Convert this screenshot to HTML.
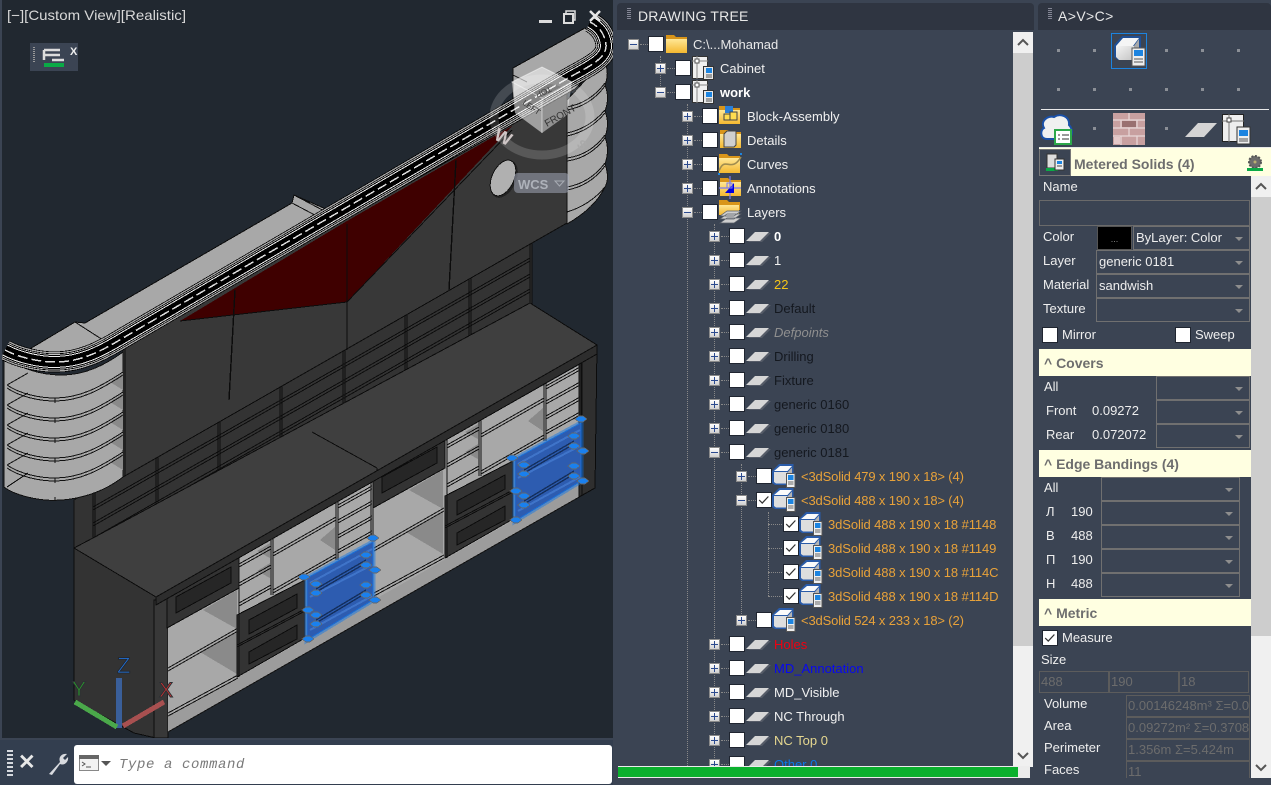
<!DOCTYPE html>
<html><head><meta charset="utf-8"><title>Drawing Tree</title>
<style>
html,body{margin:0;padding:0;width:1271px;height:785px;overflow:hidden;background:#3b4453;font-family:"Liberation Sans",sans-serif;font-size:13px;color:#f0f0f0}
*{box-sizing:border-box}
.a{position:absolute}
.hdr{position:absolute;top:3px;height:27px;background:#2f3541;border-radius:4px 4px 0 0;font-size:14px;line-height:27px;color:#e8e8e8;letter-spacing:.2px}
.grip{position:absolute;top:8px;width:4px;height:11px;background:repeating-linear-gradient(#aab 0 1px,transparent 1px 2px);opacity:.7}
#tree{position:absolute;left:0;top:32px;width:1013px;height:734px;overflow:hidden}
.r{position:absolute;height:24px;width:500px;left:0;line-height:24px;white-space:nowrap}
.l1{left:27px}.l2{left:54px}.l3{left:81px}.l4{left:108px}.l5{left:135px}
.e{position:absolute;left:628px;top:7px;width:11px;height:11px;background:linear-gradient(#fff,#cfcfcf);border:1px solid #8a8a8a}
.e::before{content:"";position:absolute;left:1px;top:4px;width:7px;height:1px;background:#2b4a8f}
.p::after{content:"";position:absolute;left:4px;top:1px;width:1px;height:7px;background:#2b4a8f}
.d{position:absolute;left:640px;top:12px;width:8px;border-top:1px dotted #888}
.c{position:absolute;left:648px;top:4px;width:16px;height:16px;background:#fff;border:1px solid #1f2530}
.ic{position:absolute;left:664px;top:0;width:28px;height:26px;overflow:visible}
.t{position:absolute;left:693px;top:1px}
.o{color:#e8a23a;letter-spacing:-.15px}
.v{position:absolute;border-left:1px dotted #888;width:0}
.h{position:absolute;border-top:1px dotted #888;height:0}
.lab{position:absolute;line-height:16px;white-space:nowrap;color:#eee}
.box{position:absolute;border:1px solid #6a6a6a}
.cb{position:absolute;border:1px solid #707070;color:#eee;line-height:21px;padding-left:2px;white-space:nowrap}
.cb::after{content:"";position:absolute;right:6px;top:10px;border-left:4px solid transparent;border-right:4px solid transparent;border-top:4px solid #8e8e8e}
.y{position:absolute;left:1039px;width:212px;height:27px;background:#ffffe1;color:#6e6e6e;font-weight:bold;line-height:29px;padding-left:5px;font-size:14px}
.ck{position:absolute;width:16px;height:16px;background:#fff;border:1px solid #1f2530}
.gi{position:absolute;border:1px solid #5c5c5c;color:#6c6c6c;line-height:19px;padding-left:1px;overflow:hidden;white-space:nowrap}
.dot{position:absolute;width:3px;height:3px;background:#8b8f96}
</style></head><body>
<svg width="0" height="0" style="position:absolute"><defs>
<linearGradient id="fy" x1="0" y1="0" x2="0" y2="1"><stop offset="0" stop-color="#ffe796"/><stop offset="1" stop-color="#f4b830"/></linearGradient>
<linearGradient id="cg" x1="0" y1="0" x2="1" y2="1"><stop offset="0" stop-color="#f4f4f4"/><stop offset="1" stop-color="#c4c4c4"/></linearGradient>
<symbol id="folder" viewBox="0 0 28 26"><path d="M2 3h8l2 2h11v16H2z" fill="#d8951a"/><path d="M2 7h21v14H2z" fill="url(#fy)"/></symbol>
<symbol id="cab" viewBox="0 0 28 26"><rect x="1.500" y="0.500" width="15" height="22" fill="#f0f0f0" stroke="#333"/><path d="M1 5h16M6 0v23" stroke="#888" fill="none"/><rect x="4" y="3" width="4" height="4" fill="#fff" stroke="#555"/><rect x="12.500" y="10.500" width="10" height="13" fill="#e8e8e8" stroke="#333"/><rect x="15" y="12" width="6" height="5" fill="#1c84e0"/><path d="M15 19h6M15 21h6" stroke="#555"/></symbol>
<symbol id="block" viewBox="0 0 28 26"><path d="M1 2h8l2 2h11v16H1z" fill="#d8951a"/><path d="M1 6h21v14H1z" fill="url(#fy)"/><rect x="7" y="2" width="8" height="7" fill="#2a7fd8"/><rect x="12" y="8" width="7" height="8" fill="#ffdc50" stroke="#444"/><rect x="6" y="10" width="6" height="6" fill="#ffdc50" stroke="#444"/></symbol>
<symbol id="det" viewBox="0 0 28 26"><path d="M2 2h8l2 2h11v16H2z" fill="#d8951a"/><path d="M2 6h21v14H2z" fill="url(#fy)"/><path d="M6 6l3-3h9v14l-2 2H6z" fill="#cfcfcf" stroke="#444"/></symbol>
<symbol id="curv" viewBox="0 0 28 26"><path d="M1 2h8l2 2h11v17H1z" fill="#d8951a"/><path d="M1 6h21v15H1z" fill="url(#fy)"/><path d="M1 19C7 3 13 22 23 5" stroke="#a08d50" stroke-width="1.600" fill="none"/><rect x="22" y="1" width="2" height="2" fill="#1c84e0"/><rect x="0" y="21" width="2" height="2" fill="#1c84e0"/></symbol>
<symbol id="anno" viewBox="0 0 28 26"><path d="M2 2h8l2 2h11v16H2z" fill="#d8951a"/><path d="M2 6h21v14H2z" fill="url(#fy)"/><path d="M1 12h22M12 0v23" stroke="#7a7af0" stroke-width="1.200"/><path d="M7 17l9-10v10z" fill="#0000e0"/><rect x="9" y="7" width="5" height="5" fill="none" stroke="#7a7af0"/></symbol>
<symbol id="lays" viewBox="0 0 28 26"><path d="M1 0h8l2 2h11v8H1z" fill="#d8951a"/><path d="M1 5h20v10H1z" fill="url(#fy)"/><path d="M2 16l7-5h14l-7 5zM2 19l7-5h14l-7 5zM2 23l7-5h14l-7 5z" fill="#cfcfcf" stroke="#5a5f68" stroke-width=".7"/></symbol>
<symbol id="lay" viewBox="0 0 28 26"><polygon points="3,18 12,9 26,9 17,18" fill="#565c68"/><polygon points="1,17 10,8 24,8 15,17" fill="#d6d6d6"/></symbol>
<symbol id="solid" viewBox="0 0 28 26"><path d="M0 7L7 0H21.500V16L16 21H3L0 19z" fill="#2a5ba8"/><path d="M2 7L8 2H20L15.500 7z" fill="#fafafa"/><path d="M16 8L20 3.500V15L16 19z" fill="#b4b4b4"/><path d="M2 8H15.500V19.500H4L2 18z" fill="#dedede"/><rect x="14.500" y="9.500" width="8.500" height="14" fill="#f0f0f0" stroke="#555"/><rect x="16" y="11" width="5.500" height="5" fill="#1c84e0"/><path d="M16 18h5.500M16 20h5.500" stroke="#666"/></symbol>
<symbol id="tick" viewBox="0 0 16 16"><path d="M2.500 8L6 11.500 13 4" fill="none" stroke="#333" stroke-width="1.400"/></symbol>
<path id="mold" d="M5,350 C20,358 40,362 55,362 C80,362 100,352 123,338 L570,77 C590,66 607,58 606,45 C605,35 600,27 590,22" fill="none"/>
<polygon id="g" points="-6,0 -2,-3 2,-3 6,0 2,3 -2,3" fill="#1a80ee" stroke="#666" stroke-width=".7"/>
<g id="unit">
<polygon points="257,551 270,558 270,543" fill="#8a8a8a"/>
<polygon points="257,571 270,578 270,563" fill="#8a8a8a"/>
<polygon points="320,540 335,550 335,527" fill="#8a8a8a"/>
<path d="M239,564L271,546M239,567L271,549M239,583L271,565M239,586L271,568M239,603L271,585M239,606L271,588M273,553L336,517M273,556L336,520M273,590L336,554M273,593L336,557M338,505L372,486M338,508L372,489M338,520L372,501M338,523L372,504M338,535L372,516M338,538L372,519M338,550L372,531M338,553L372,534M338,565L372,546M338,568L372,549" stroke="#111" fill="none"/>
<path d="M239,555V620M271,538V595M273,537V595M336,500V560M338,499V560M371,481V540M373,480V540" stroke="#111" fill="none"/>
<polygon points="237,615 305,580 305,638 237,677" fill="#333" stroke="#0c0c0c"/>
<path d="M237,645L305,609M237,647L305,611M239,615V677" stroke="#0c0c0c"/>
<polygon points="249,620 297,594 297,608 249,634" fill="#262626" stroke="#0c0c0c"/>
<polygon points="249,652 297,625 297,639 249,664" fill="#262626" stroke="#0c0c0c"/>
<polygon points="307,578 373,542 373,600 307,640" fill="#1677e6" fill-opacity=".45" stroke="#1677e6" stroke-opacity=".5" stroke-width="5"/>
<polygon points="307,578 373,542 373,600 307,640" fill="#2d5cb0" stroke="#1a6fd8"/>
<path d="M316,589L366,560M316,592L366,563M316,620L366,590M316,623L366,593" stroke="#14305f" stroke-width="1.400"/>
<path d="M310,597L372,565M310,630L372,596M310,583L372,549" stroke="#3f74c9" stroke-width="2"/>
<use href="#g" x="373" y="538"/><use href="#g" x="304" y="577"/><use href="#g" x="375" y="570"/><use href="#g" x="366" y="555"/><use href="#g" x="316" y="584"/><use href="#g" x="366" y="565"/><use href="#g" x="316" y="593"/><use href="#g" x="308" y="610"/><use href="#g" x="375" y="600"/><use href="#g" x="366" y="585"/><use href="#g" x="366" y="595"/><use href="#g" x="316" y="615"/><use href="#g" x="316" y="624"/><use href="#g" x="308" y="639"/>
</g>
<g id="bay">
<polygon points="203,610 237,629 237,590" fill="#8a8a8a"/>
<polygon points="200,652 237,674 237,632" fill="#8a8a8a"/>
<path d="M168,668L238,628M168,671L238,631M168,713L238,675M168,716L238,678" stroke="#111" fill="none"/>
<polygon points="167,598 239,555 239,588 167,628" fill="#333" stroke="#0c0c0c"/>
<polygon points="176,597 231,567 231,583 176,613" fill="#262626" stroke="#0c0c0c"/>
</g>
</defs></svg>

<!-- Viewport -->
<svg class="a" style="left:2px;top:0" width="611" height="738" viewBox="2 0 611 738" shape-rendering="crispEdges">
<rect x="2" y="0" width="611" height="738" fill="#212830"/>
<polygon points="74,500 123,470 532,240 532,306 312,434 156,524 93,560 74,548" fill="#333" stroke="#111"/>
<path d="M93,507L530,258M93,510L530,261M93,523L530,274M93,526L530,277M93,538L530,289M93,541L530,292" stroke="#0d0d0d" fill="none"/>
<path d="M93,490V557M95,490V556M156,458V521M158,457V520M218,423V486M220,422V485M280,387V451M282,386V450M343,351V415M345,350V414M405,316V379M407,315V378M469,279V342M471,278V341M530,244V308M532,243V307" stroke="#0d0d0d" fill="none"/>
<polygon points="74,548 156,597 156,738 134,733 74,700" fill="#333" stroke="#0c0c0c"/>
<polygon points="154,600 168,598 168,738 154,738" fill="#383838" stroke="#0c0c0c"/>
<polygon points="168,598 579,365 579,497 168,732" fill="#a8a8a8"/>
<polygon points="168,716 237,678 579,483 579,497 168,732" fill="#9c9c9c"/>
<path d="M168,732L595,488" stroke="#111" fill="none"/>
<polygon points="579,350 597,346 595,488 579,497" fill="#2f2f2f" stroke="#0c0c0c"/>
<path d="M579,355V497M582,354V496" stroke="#0c0c0c"/>
<use href="#bay"/><use href="#bay" transform="translate(206,-120)"/>
<use href="#unit"/><use href="#unit" transform="translate(208,-119)"/>
<path d="M239,556V620M447,438V500" stroke="#111" fill="none"/>
<polygon points="74,548 93,538 530,303 597,345 597,354 156,605 156,597" fill="#3f3f3f" stroke="#0c0c0c"/>
<path d="M156,597L597,345M312,432L377,468M377,468V476" stroke="#0c0c0c" fill="none"/>
<polygon points="156,597 597,345 597,354 156,605" fill="#2d2d2d" stroke="#0c0c0c"/>
<polygon points="123,340 567,85 567,223 123,477" fill="#383838" stroke="#0c0c0c"/>
<path d="M125,340V476" stroke="#0c0c0c"/>
<polygon points="180,321 347,221 512,126 347,302" fill="#3f0000"/>
<path d="M180,321L347,302L512,130" stroke="#0c0c0c" fill="none"/>
<path d="M235,290L229,400M347,224V350M456,160L449,290" stroke="#0c0c0c" stroke-width="1.400" fill="none"/>
<ellipse cx="504" cy="179" rx="12" ry="20" transform="rotate(25 504 179)" fill="#222"/>
<ellipse cx="503" cy="178" rx="11" ry="19" transform="rotate(25 503 178)" fill="#b0b0b0" stroke="#111"/>
<path d="M567,100 L604,60 Q610,72 605,85 Q610,98 605,111 Q610,124 605,137 Q610,150 605,164 Q610,178 605,187 Q595,208 567,224 Z" fill="#a8a8a8" stroke="#111"/>
<path d="M567,107Q590,103 605,83M567,110Q590,106 605,86M567,133Q590,128 605,110M567,136Q590,131 605,113M567,158Q590,155 605,135M567,161Q590,158 605,138M567,187Q590,183 605,163M567,190Q590,186 605,166M567,212Q590,205 605,187" stroke="#111" fill="none"/>
<polygon points="28,350 75,322 85,323 292,203 294,195 328,210 513,102 513,68 585,28 596,37 606,58 575,89 123,345 62,366" fill="#a8a8a8" stroke="#0c0c0c"/>
<path d="M292,203L328,222M294,195L330,214M513,68V75L527,82M75,322L103,340" stroke="#111" fill="none"/>
<path d="M4,357 C20,368 40,375 62,375 C85,375 105,365 123,352 L123,477 C100,495 70,502 45,500 C25,498 10,492 4,487 Z" fill="#a8a8a8" stroke="#111"/>
<polygon points="110,382 123,390 123,373" fill="#8a8a8a"/><polygon points="110,402 123,410 123,393" fill="#8a8a8a"/><polygon points="110,422 123,430 123,413" fill="#8a8a8a"/><polygon points="110,442 123,450 123,433" fill="#8a8a8a"/><polygon points="110,462 123,470 123,453" fill="#8a8a8a"/>
<g fill="none" stroke="#111">
<path d="M7,385C20,394 40,398 55,398C80,398 100,387 123,372M7,388C20,397 40,401 55,401C80,401 100,390 123,375M7,385L28,373"/>
<path d="M7,405C20,414 40,418 55,418C80,418 100,407 123,392M7,408C20,417 40,421 55,421C80,421 100,410 123,395M7,405L28,393"/>
<path d="M7,425C20,434 40,438 55,438C80,438 100,427 123,412M7,428C20,437 40,441 55,441C80,441 100,430 123,415M7,425L28,413"/>
<path d="M7,445C20,454 40,458 55,458C80,458 100,447 123,432M7,448C20,457 40,461 55,461C80,461 100,450 123,435M7,445L28,433"/>
<path d="M7,465C20,474 40,478 55,478C80,478 100,467 123,452M7,468C20,477 40,481 55,481C80,481 100,470 123,455M7,465L28,453"/>
<path d="M7,487L28,473M55,398v5M55,418v5M55,438v5M55,458v5M55,478v5M55,497v4M4,357V487"/>
</g>
<use href="#mold" stroke="#000" stroke-width="21"/>
<use href="#mold" stroke="#a8a8a8" stroke-width="19.500"/>
<use href="#mold" stroke="#000" stroke-width="17"/>
<use href="#mold" stroke="#c8c8c8" stroke-width="15.500"/>
<use href="#mold" stroke="#000" stroke-width="14"/>
<use href="#mold" stroke="#eee" stroke-width="12"/>
<use href="#mold" stroke="#000" stroke-width="10"/>
<use href="#mold" stroke="#ddd" stroke-width="1.500" stroke-dasharray="10 4"/>
<path d="M119,678V728" stroke="#3a5f9a" stroke-width="6"/>
<path d="M75,702L117,727" stroke="#4aa84a" stroke-width="5"/>
<path d="M164,702L123,726" stroke="#a85050" stroke-width="5"/>
<text x="117" y="673" font-size="22" fill="#1f7af0" stroke="#25292f" stroke-width="1">Z</text>
<text x="72" y="696" font-size="21" fill="#2aa82a" stroke="#2c3034" stroke-width="1">Y</text>
<text x="159" y="697" font-size="21" fill="#e03030" stroke="#2c3034" stroke-width="1">X</text>
<g shape-rendering="auto">
<ellipse cx="542" cy="117" rx="48" ry="38" fill="none" stroke="#fff" stroke-opacity=".16" stroke-width="9"/>
<polygon points="512,82 542,67 572,82 542,98" fill="#fff" fill-opacity=".5"/>
<polygon points="512,82 542,98 542,133 515,113" fill="#fff" fill-opacity=".52"/>
<polygon points="542,98 572,82 567,115 542,133" fill="#fff" fill-opacity=".45"/>
<path d="M512,82L542,67L572,82L542,98ZM542,98V133" stroke="#fff" stroke-opacity=".5" fill="none"/>
<text x="0" y="0" font-size="8" fill="#333" transform="translate(522,104) rotate(35)">LEFT</text>
<text x="0" y="0" font-size="10" fill="#333" transform="translate(547,127) rotate(-30)">FRONT</text>
<text x="0" y="0" font-size="8" fill="#444" transform="translate(550,86) rotate(155)">TOP</text>
<text x="0" y="0" font-size="18" font-weight="bold" fill="#cfc6c6" transform="translate(493,139) rotate(25)">W</text>
<text x="0" y="0" font-size="13" font-weight="bold" fill="#aaa" transform="translate(576,146) rotate(35)">S</text>
<rect x="514" y="173" width="55" height="20" rx="4" fill="#a9afc2" fill-opacity=".5"/>
<text x="518" y="189" font-size="13" font-weight="bold" fill="#aeb2ba">WCS</text>
<path d="M555,181h9l-4.500,5z" fill="none" stroke="#a8acb4"/>
<rect x="539" y="20" width="13" height="3" fill="#dcdcdc"/>
<rect x="566" y="11" width="9" height="9" fill="none" stroke="#ddd" stroke-width="1.500"/>
<rect x="564" y="14" width="9" height="9" fill="#212830" stroke="#ddd" stroke-width="2"/>
<path d="M590,11L600,21M600,11L590,21" stroke="#e6e6e6" stroke-width="2.500"/>
<text x="7" y="20" font-size="14" fill="#d8d8d8" textLength="179" lengthAdjust="spacingAndGlyphs">[−][Custom View][Realistic]</text>
<rect x="30" y="43" width="48" height="28" fill="#3b4453"/>
<path d="M34,47V63" stroke="#999" stroke-width="2" stroke-dasharray="1 1"/>
<path d="M44,50V60M44,50h16M44,55h16M52,60h12" stroke="#ddd" stroke-width="2.500" fill="none"/>
<rect x="44" y="63" width="20" height="4" fill="#0aaa46"/>
<text x="70" y="55" font-size="11" font-weight="bold" fill="#eee">X</text>
</g>
</svg>

<!-- command bar -->
<div class="a" style="left:0;top:740px;width:613px;height:45px;background:#333e4f"></div>
<div class="a" style="left:7px;top:750px;width:6px;height:26px;background:repeating-linear-gradient(#d5d8de 0 2px,transparent 2px 4px);"></div>
<div class="a" style="left:18px;top:752px;font-size:21px;line-height:22px;color:#e8e8e8;font-weight:bold">✕</div>
<svg class="a" style="left:46px;top:752px" width="24" height="24" viewBox="0 0 24 24"><path d="M3 22L14 10C12 5 16 1 21 2L17 6 19 8 22 5C23 10 18 14 14 12L6 23z" fill="#d8dadf"/></svg>
<div class="a" style="left:74px;top:745px;width:538px;height:39px;background:#fff;border-radius:3px"></div>
<svg class="a" style="left:79px;top:755px" width="34" height="18" viewBox="0 0 34 18"><rect x="0.500" y="0.500" width="19" height="15" fill="#f2f2f2" stroke="#888"/><rect x="0" y="0" width="20" height="4" fill="#666"/><path d="M3 7l3 2-3 2M7 12h5" stroke="#555" fill="none"/><path d="M22 6h10l-5 5z" fill="#555"/></svg>
<div class="a" style="left:119px;top:756px;font-family:'Liberation Mono',monospace;font-style:italic;font-size:14px;color:#7a7a7a;letter-spacing:.6px;line-height:18px">Type a command</div>

<!-- Tree panel -->
<div class="hdr" style="left:617px;width:417px;padding-left:21px">DRAWING TREE</div><div class="grip" style="left:627px"></div>
<div class="a" style="left:1013px;top:32px;width:20px;height:735px;background:#f0f0f0"></div>
<div class="a" style="left:1013px;top:53px;width:20px;height:593px;background:#cdcdcd"></div>
<svg class="a" style="left:1013px;top:32px" width="20" height="21"><path d="M5 13l5-5 5 5" fill="none" stroke="#555" stroke-width="2"/></svg>
<svg class="a" style="left:1013px;top:745px" width="20" height="21"><path d="M5 8l5 5 5-5" fill="none" stroke="#555" stroke-width="2"/></svg>
<div class="a" style="left:618px;top:766px;width:412px;height:12px;background:#ececec"></div>
<div class="a" style="left:618px;top:767px;width:400px;height:10px;background:#0bb02e"></div>

<div id="tree">
<div class="v" style="left:660px;top:24px;height:36px"></div>
<div class="v" style="left:687px;top:72px;height:662px"></div>
<div class="v" style="left:714px;top:192px;height:542px"></div>
<div class="v" style="left:741px;top:432px;height:156px"></div>
<div class="v" style="left:768px;top:480px;height:84px"></div>
<div class="h" style="left:768px;top:492px;width:14px"></div><div class="h" style="left:768px;top:516px;width:14px"></div><div class="h" style="left:768px;top:540px;width:14px"></div><div class="h" style="left:768px;top:564px;width:14px"></div>

<div class="r" style="top:0"><i class="e"></i><i class="d"></i><i class="c"></i><svg class="ic"><use href="#folder"/></svg><span class="t" style="color:#e8e8e8">C:\...Mohamad</span></div>
<div class="r l1" style="top:24px"><i class="e p"></i><i class="d"></i><i class="c"></i><svg class="ic"><use href="#cab"/></svg><span class="t">Cabinet</span></div>
<div class="r l1" style="top:48px"><i class="e"></i><i class="d"></i><i class="c"></i><svg class="ic"><use href="#cab"/></svg><span class="t" style="font-weight:bold;color:#fff">work</span></div>
<div class="r l2" style="top:72px"><i class="e p"></i><i class="d"></i><i class="c"></i><svg class="ic"><use href="#block"/></svg><span class="t">Block-Assembly</span></div>
<div class="r l2" style="top:96px"><i class="e p"></i><i class="d"></i><i class="c"></i><svg class="ic"><use href="#det"/></svg><span class="t">Details</span></div>
<div class="r l2" style="top:120px"><i class="e p"></i><i class="d"></i><i class="c"></i><svg class="ic"><use href="#curv"/></svg><span class="t">Curves</span></div>
<div class="r l2" style="top:144px"><i class="e p"></i><i class="d"></i><i class="c"></i><svg class="ic"><use href="#anno"/></svg><span class="t">Annotations</span></div>
<div class="r l2" style="top:168px"><i class="e"></i><i class="d"></i><i class="c"></i><svg class="ic"><use href="#lays"/></svg><span class="t">Layers</span></div>
<div class="r l3" style="top:192px"><i class="e p"></i><i class="d"></i><i class="c"></i><svg class="ic"><use href="#lay"/></svg><span class="t" style="font-weight:bold;color:#fff">0</span></div>
<div class="r l3" style="top:216px"><i class="e p"></i><i class="d"></i><i class="c"></i><svg class="ic"><use href="#lay"/></svg><span class="t">1</span></div>
<div class="r l3" style="top:240px"><i class="e p"></i><i class="d"></i><i class="c"></i><svg class="ic"><use href="#lay"/></svg><span class="t" style="color:#f5c518">22</span></div>
<div class="r l3" style="top:264px"><i class="e p"></i><i class="d"></i><i class="c"></i><svg class="ic"><use href="#lay"/></svg><span class="t" style="color:#14181f">Default</span></div>
<div class="r l3" style="top:288px"><i class="e p"></i><i class="d"></i><i class="c"></i><svg class="ic"><use href="#lay"/></svg><span class="t" style="color:#8f8f8f;font-style:italic">Defpoints</span></div>
<div class="r l3" style="top:312px"><i class="e p"></i><i class="d"></i><i class="c"></i><svg class="ic"><use href="#lay"/></svg><span class="t" style="color:#14181f">Drilling</span></div>
<div class="r l3" style="top:336px"><i class="e p"></i><i class="d"></i><i class="c"></i><svg class="ic"><use href="#lay"/></svg><span class="t" style="color:#14181f">Fixture</span></div>
<div class="r l3" style="top:360px"><i class="e p"></i><i class="d"></i><i class="c"></i><svg class="ic"><use href="#lay"/></svg><span class="t" style="color:#14181f">generic 0160</span></div>
<div class="r l3" style="top:384px"><i class="e p"></i><i class="d"></i><i class="c"></i><svg class="ic"><use href="#lay"/></svg><span class="t" style="color:#14181f">generic 0180</span></div>
<div class="r l3" style="top:408px"><i class="e"></i><i class="d"></i><i class="c"></i><svg class="ic"><use href="#lay"/></svg><span class="t" style="color:#14181f">generic 0181</span></div>
<div class="r l4" style="top:432px"><i class="e p"></i><i class="d"></i><i class="c"></i><svg class="ic"><use href="#solid"/></svg><span class="t o">&lt;3dSolid 479 x 190 x 18&gt; (4)</span></div>
<div class="r l4" style="top:456px"><i class="e"></i><i class="d"></i><i class="c"><svg width="14" height="14" viewBox="0 0 16 16" style="display:block"><use href="#tick"/></svg></i><svg class="ic"><use href="#solid"/></svg><span class="t o">&lt;3dSolid 488 x 190 x 18&gt; (4)</span></div>
<div class="r l5" style="top:480px"><i class="c"><svg width="14" height="14" viewBox="0 0 16 16" style="display:block"><use href="#tick"/></svg></i><svg class="ic"><use href="#solid"/></svg><span class="t o" style="letter-spacing:-.1px">3dSolid 488 x 190 x 18 #1148</span></div>
<div class="r l5" style="top:504px"><i class="c"><svg width="14" height="14" viewBox="0 0 16 16" style="display:block"><use href="#tick"/></svg></i><svg class="ic"><use href="#solid"/></svg><span class="t o" style="letter-spacing:-.1px">3dSolid 488 x 190 x 18 #1149</span></div>
<div class="r l5" style="top:528px"><i class="c"><svg width="14" height="14" viewBox="0 0 16 16" style="display:block"><use href="#tick"/></svg></i><svg class="ic"><use href="#solid"/></svg><span class="t o" style="letter-spacing:-.1px">3dSolid 488 x 190 x 18 #114C</span></div>
<div class="r l5" style="top:552px"><i class="c"><svg width="14" height="14" viewBox="0 0 16 16" style="display:block"><use href="#tick"/></svg></i><svg class="ic"><use href="#solid"/></svg><span class="t o" style="letter-spacing:-.1px">3dSolid 488 x 190 x 18 #114D</span></div>
<div class="r l4" style="top:576px"><i class="e p"></i><i class="d"></i><i class="c"></i><svg class="ic"><use href="#solid"/></svg><span class="t o">&lt;3dSolid 524 x 233 x 18&gt; (2)</span></div>
<div class="r l3" style="top:600px"><i class="e p"></i><i class="d"></i><i class="c"></i><svg class="ic"><use href="#lay"/></svg><span class="t" style="color:#f00010">Holes</span></div>
<div class="r l3" style="top:624px"><i class="e p"></i><i class="d"></i><i class="c"></i><svg class="ic"><use href="#lay"/></svg><span class="t" style="color:#0808f0">MD_Annotation</span></div>
<div class="r l3" style="top:648px"><i class="e p"></i><i class="d"></i><i class="c"></i><svg class="ic"><use href="#lay"/></svg><span class="t">MD_Visible</span></div>
<div class="r l3" style="top:672px"><i class="e p"></i><i class="d"></i><i class="c"></i><svg class="ic"><use href="#lay"/></svg><span class="t">NC Through</span></div>
<div class="r l3" style="top:696px"><i class="e p"></i><i class="d"></i><i class="c"></i><svg class="ic"><use href="#lay"/></svg><span class="t" style="color:#e6d890">NC Top 0</span></div>
<div class="r l3" style="top:720px"><i class="e p"></i><i class="d"></i><i class="c"></i><svg class="ic"><use href="#lay"/></svg><span class="t" style="color:#0a78e8">Other 0</span></div>
</div>

<!-- Right panel -->
<div class="hdr" style="left:1038px;width:233px;padding-left:20px;letter-spacing:.4px">A&gt;V&gt;C&gt;</div><div class="grip" style="left:1048px"></div>
<i class="dot" style="left:1057px;top:49px"></i><i class="dot" style="left:1093px;top:49px"></i><i class="dot" style="left:1165px;top:49px"></i><i class="dot" style="left:1201px;top:49px"></i><i class="dot" style="left:1237px;top:49px"></i>
<i class="dot" style="left:1057px;top:88px"></i><i class="dot" style="left:1093px;top:88px"></i><i class="dot" style="left:1129px;top:88px"></i><i class="dot" style="left:1165px;top:88px"></i><i class="dot" style="left:1201px;top:88px"></i><i class="dot" style="left:1237px;top:88px"></i>
<div class="a" style="left:1111px;top:33px;width:36px;height:36px;border:1px solid #1c84e0"></div>
<svg class="a" style="left:1113px;top:35px" width="33" height="33" viewBox="0 0 33 33"><path d="M1 10L9 1h19v24H5l-4-3z" fill="#1f4f95"/><path d="M3 11l7-8h16l-6 8z" fill="#f5f5f5"/><path d="M21 11l5-7v18l-5 3z" fill="#a8a8a8"/><path d="M3 11h18v14H6l-3-3z" fill="url(#cg)"/><rect x="19" y="13" width="13" height="18" fill="#eee" stroke="#555"/><rect x="21" y="15" width="9" height="6" fill="#1c84e0"/><path d="M21 24h9M21 27h9" stroke="#555"/></svg>
<div class="a" style="left:1041px;top:109px;width:228px;height:1px;background:#e8e8e8"></div>
<svg class="a" style="left:1040px;top:113px" width="34" height="32" viewBox="0 0 34 32"><path d="M7 26C0 26 0 17 4 15 0 8 8 2 14 4 20 0 30 3 29 12 33 16 33 24 28 26z" fill="#f0f0f0" stroke="#1a50a8" stroke-width="2"/><rect x="15" y="17" width="16" height="14" fill="#fff" stroke="#2da84a" stroke-width="2"/><path d="M18 22h2M22 22h7M18 26h2M22 26h7" stroke="#333"/></svg>
<i class="dot" style="left:1093px;top:127px"></i><i class="dot" style="left:1165px;top:127px"></i>
<svg class="a" style="left:1113px;top:113px" width="32" height="32" viewBox="0 0 32 32"><rect width="32" height="32" fill="#c8a0a0"/><path d="M0 7h32M0 15h32M0 23h32M16 0v7M8 7v8M24 7v8M16 15v8M8 23v9M24 23v9" stroke="#e8d8d8" stroke-width="1.200"/><rect x="9" y="8" width="14" height="6" fill="#9a7070"/><rect x="1" y="24" width="6" height="7" fill="#e4c8c8"/></svg>
<svg class="a" style="left:1184px;top:122px" width="34" height="16"><path d="M1 15L14 1h19L20 15z" fill="#d4d4d4"/></svg>
<svg class="a" style="left:1221px;top:113px" width="32" height="33" viewBox="0 0 32 33"><rect x="1.500" y="1.500" width="21" height="27" fill="#eee" stroke="#222"/><path d="M1 8h22M8 1v28" stroke="#777" fill="none"/><rect x="6" y="5" width="4" height="4" fill="#fff" stroke="#444"/><rect x="16" y="14" width="13" height="17" fill="#eee" stroke="#333"/><rect x="18" y="17" width="9" height="6" fill="#1c84e0"/><path d="M18 26h9M18 28h9" stroke="#555"/></svg>
<div class="a" style="left:1039px;top:147px;width:232px;height:1px;background:#e8e8e8"></div>
<div class="a" style="left:1039px;top:148px;width:232px;height:28px;background:#ffffe1"></div>
<div class="a" style="left:1039px;top:149px;width:32px;height:27px;border:1px solid #777;background:#3b4453"></div>
<svg class="a" style="left:1046px;top:153px" width="20" height="19" viewBox="0 0 20 19"><rect x="1" y="1" width="10" height="14" fill="#ddd" stroke="#333"/><rect x="0" y="15" width="12" height="3" fill="#0aaa46"/><rect x="9" y="6" width="9" height="11" fill="#eee" stroke="#333"/><rect x="11" y="8" width="5" height="3" fill="#1c84e0"/><path d="M11 13h5" stroke="#444"/></svg>
<div class="a" style="left:1074px;top:150px;font-weight:bold;color:#6e6e6e;line-height:28px;font-size:14px;white-space:nowrap">Metered Solids (4)</div>
<svg class="a" style="left:1246px;top:154px" width="18" height="18" viewBox="0 0 18 18"><circle cx="9" cy="8" r="6" fill="#6c6c6c" stroke="#555" stroke-width="2" stroke-dasharray="2 1.500"/><circle cx="9" cy="8" r="1.500" fill="#b8b070"/><rect x="1" y="14" width="16" height="3" fill="#0aaa46"/></svg>

<div class="a" style="left:1251px;top:176px;width:20px;height:602px;background:#f0f0f0"></div>
<div class="a" style="left:1251px;top:197px;width:20px;height:439px;background:#cdcdcd"></div>
<svg class="a" style="left:1251px;top:176px" width="20" height="21"><path d="M5 13l5-5 5 5" fill="none" stroke="#555" stroke-width="2"/></svg>
<svg class="a" style="left:1251px;top:757px" width="20" height="21"><path d="M5 8l5 5 5-5" fill="none" stroke="#555" stroke-width="2"/></svg>

<div class="lab" style="left:1043px;top:179px">Name</div>
<div class="box" style="left:1039px;top:200px;width:211px;height:26px"></div>
<div class="lab" style="left:1043px;top:229px">Color</div>
<div class="a" style="left:1097px;top:226px;width:35px;height:24px;background:#000;border:1px solid #555;color:#888;font-size:9px;text-align:center;line-height:24px">...</div>
<div class="cb" style="left:1133px;top:226px;width:117px;height:24px">ByLayer: Color</div>
<div class="lab" style="left:1043px;top:253px">Layer</div>
<div class="cb" style="left:1096px;top:250px;width:154px;height:24px">generic 0181</div>
<div class="lab" style="left:1043px;top:277px">Material</div>
<div class="cb" style="left:1096px;top:274px;width:154px;height:24px">sandwish</div>
<div class="lab" style="left:1043px;top:301px">Texture</div>
<div class="cb" style="left:1096px;top:298px;width:154px;height:24px"></div>
<div class="ck" style="left:1042px;top:327px"></div><div class="lab" style="left:1062px;top:327px">Mirror</div>
<div class="ck" style="left:1175px;top:327px"></div><div class="lab" style="left:1195px;top:327px">Sweep</div>

<div class="y" style="top:349px">^ Covers</div>
<div class="lab" style="left:1044px;top:379px">All</div><div class="cb" style="left:1156px;top:376px;width:94px;height:24px"></div>
<div class="lab" style="left:1046px;top:403px">Front</div><div class="lab" style="left:1092px;top:403px">0.09272</div><div class="cb" style="left:1156px;top:400px;width:94px;height:24px"></div>
<div class="lab" style="left:1046px;top:427px">Rear</div><div class="lab" style="left:1092px;top:427px">0.072072</div><div class="cb" style="left:1156px;top:424px;width:94px;height:24px"></div>

<div class="y" style="top:450px">^ Edge Bandings (4)</div>
<div class="lab" style="left:1044px;top:480px">All</div><div class="cb" style="left:1101px;top:477px;width:139px;height:24px"></div>
<div class="lab" style="left:1046px;top:504px">Л</div><div class="lab" style="left:1071px;top:504px">190</div><div class="cb" style="left:1101px;top:501px;width:139px;height:24px"></div>
<div class="lab" style="left:1046px;top:528px">В</div><div class="lab" style="left:1071px;top:528px">488</div><div class="cb" style="left:1101px;top:525px;width:139px;height:24px"></div>
<div class="lab" style="left:1046px;top:552px">П</div><div class="lab" style="left:1071px;top:552px">190</div><div class="cb" style="left:1101px;top:549px;width:139px;height:24px"></div>
<div class="lab" style="left:1046px;top:576px">Н</div><div class="lab" style="left:1071px;top:576px">488</div><div class="cb" style="left:1101px;top:573px;width:139px;height:24px"></div>

<div class="y" style="top:599px">^ Metric</div>
<div class="ck" style="left:1042px;top:630px"><svg width="14" height="14" viewBox="0 0 16 16" style="display:block"><use href="#tick"/></svg></div><div class="lab" style="left:1062px;top:630px">Measure</div>
<div class="lab" style="left:1041px;top:652px">Size</div>
<div class="gi" style="left:1039px;top:671px;width:70px;height:22px">488</div>
<div class="gi" style="left:1109px;top:671px;width:70px;height:22px">190</div>
<div class="gi" style="left:1179px;top:671px;width:70px;height:22px">18</div>
<div class="lab" style="left:1044px;top:696px">Volume</div><div class="gi" style="left:1126px;top:695px;width:124px;height:22px">0.00146248m³ Σ=0.00585</div>
<div class="lab" style="left:1044px;top:718px">Area</div><div class="gi" style="left:1126px;top:717px;width:124px;height:22px">0.09272m² Σ=0.37088</div>
<div class="lab" style="left:1044px;top:740px">Perimeter</div><div class="gi" style="left:1126px;top:739px;width:124px;height:22px">1.356m Σ=5.424m</div>
<div class="lab" style="left:1044px;top:762px">Faces</div><div class="gi" style="left:1126px;top:761px;width:124px;height:17px;border-bottom:0">11</div>
</body></html>
